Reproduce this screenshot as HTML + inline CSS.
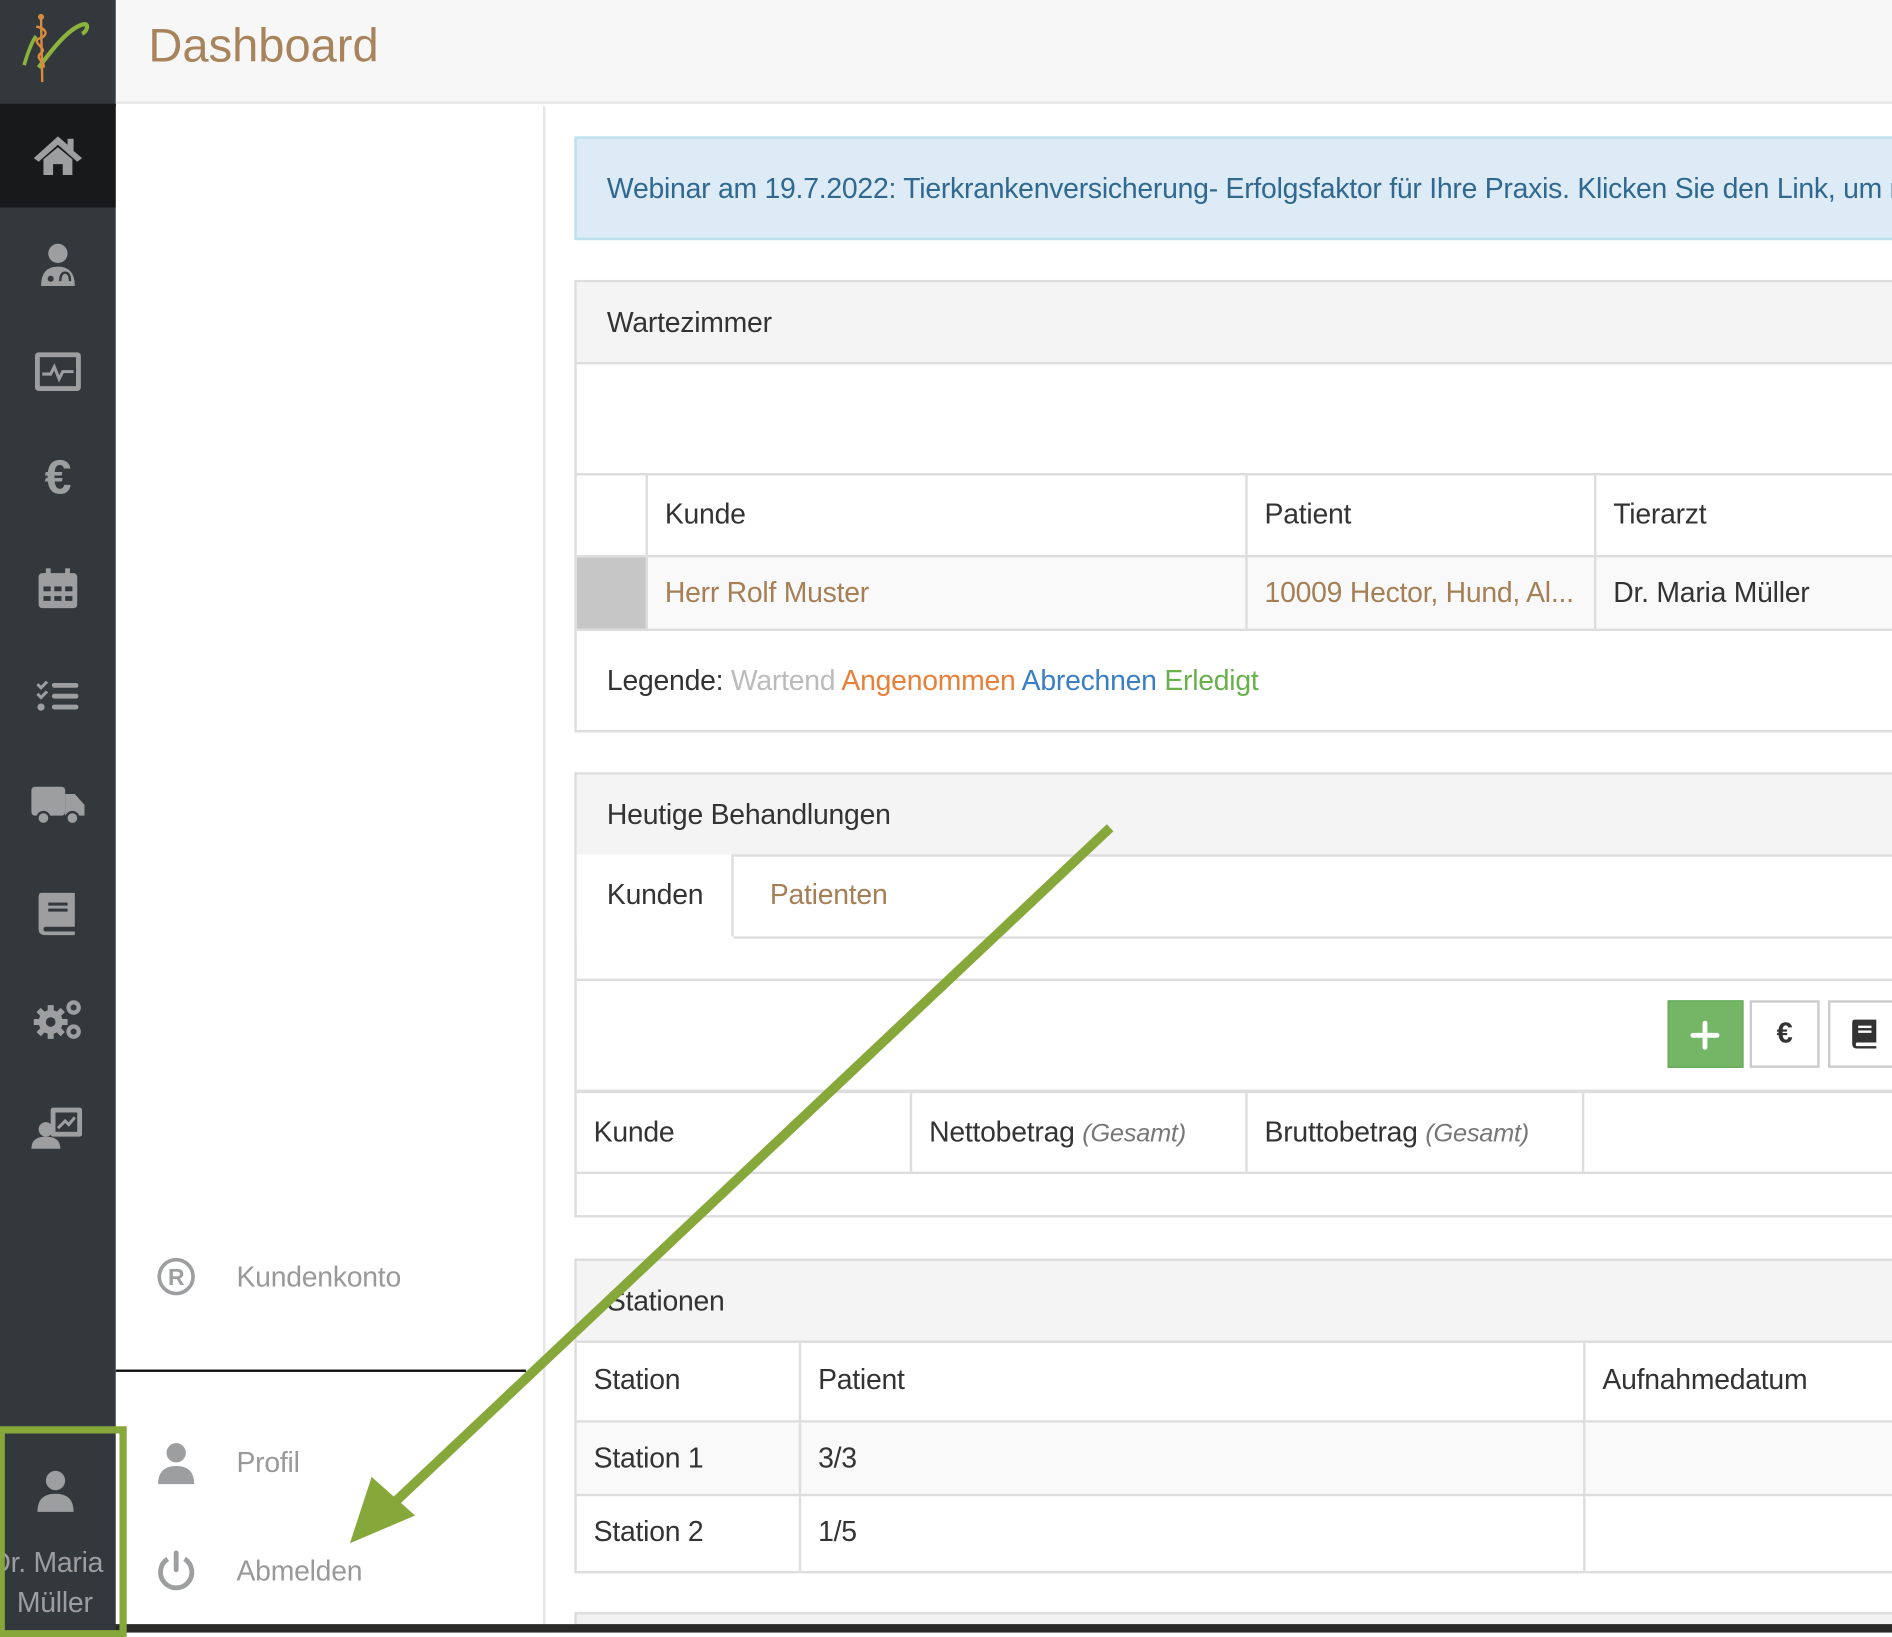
<!DOCTYPE html>
<html><head><meta charset="utf-8"><style>
*{box-sizing:border-box;margin:0;padding:0}
html,body{width:1892px;height:1632px;overflow:hidden;background:#fff}
#s{position:absolute;left:0;top:0;width:1568px;height:1353px;transform:scale(1.20663);transform-origin:0 0;font-family:"Liberation Sans",sans-serif;color:#333;font-size:23.5px;letter-spacing:-0.2px}
.a{position:absolute}
.side{left:0;top:0;width:96px;height:1353px;background:#33383c}
.ic{position:absolute;left:24px;width:48px;height:48px}
.hdr{left:96px;top:0;width:1472px;height:86px;background:#f7f7f7;border-bottom:2px solid #e6e6e6}
.panel{left:476px;width:1100px;border:2px solid #ddd;background:#fff}
.ph{height:68px;background:#f4f4f4;border-bottom:2px solid #ddd;padding-left:25px;line-height:66px}
.cell{position:absolute;border-right:2px solid #ddd;height:100%;padding-left:14px;white-space:nowrap}
.row{position:absolute;left:0;right:0;border-bottom:2px solid #ddd}
.br{color:#a57f55}
.gr{color:#999}
i{color:#777;font-size:21px}
</style></head><body><div id="s">
<div class="a side">
 <svg class="a" style="left:14px;top:10px" width="64" height="60" viewBox="0 0 64 60"><path d="M6 44 C10 30 14 22 16 20" stroke="#8cb43c" stroke-width="3" fill="none"/><path d="M18 46 C30 30 44 12 56 10 C60 10 58 16 54 18" stroke="#8cb43c" stroke-width="3.5" fill="none"/><line x1="20" y1="4" x2="21" y2="58" stroke="#d98a3d" stroke-width="2"/><path d="M16 12 C26 14 26 20 18 22 C12 26 26 30 20 34 C14 38 24 42 22 46" stroke="#d98a3d" stroke-width="2" fill="none"/><circle cx="20" cy="4" r="2.5" fill="#d98a3d"/></svg>
 <div class="a" style="left:0;top:86px;width:96px;height:86px;background:#18191b"></div>
 <svg class="ic" style="top:105px" viewBox="0 0 48 48" fill="#9d9ea0"><path d="M24 8 L4 26 L8 29 L24 15 L40 29 L44 26 L37 20 L37 10 L32 10 L32 15Z"/><path d="M12 27 L24 17 L36 27 L36 40 L28 40 L28 31 L20 31 L20 40 L12 40Z"/></svg>
 <svg class="ic" style="top:195px" viewBox="0 0 48 48" fill="#9d9ea0"><circle cx="24" cy="15" r="8"/><path d="M10 42 Q10 26 24 26 Q38 26 38 42Z"/><circle cx="18" cy="36" r="2.5" fill="#33383c"/><path d="M26 38 Q26 31 30 31 Q34 31 34 38" stroke="#33383c" stroke-width="2" fill="none"/></svg>
 <svg class="ic" style="top:284px" viewBox="0 0 48 48"><rect x="5" y="8" width="38" height="32" rx="3" fill="#9d9ea0"/><rect x="9" y="12" width="30" height="24" fill="#33383c"/><path d="M11 26 H18 L21 20 L25 30 L28 24 H37" stroke="#9d9ea0" stroke-width="2.5" fill="none"/></svg>
 <div class="a" style="left:0;top:374px;width:96px;text-align:center;font-size:40px;color:#9d9ea0;font-weight:bold">€</div>
 <svg class="ic" style="top:464px" viewBox="0 0 48 48" fill="#9d9ea0"><rect x="8" y="11" width="32" height="29" rx="3"/><rect x="14" y="7" width="4" height="8"/><rect x="30" y="7" width="4" height="8"/><g fill="#33383c"><rect x="12" y="22" width="6" height="4"/><rect x="21" y="22" width="6" height="4"/><rect x="30" y="22" width="6" height="4"/><rect x="12" y="30" width="6" height="4"/><rect x="21" y="30" width="6" height="4"/><rect x="30" y="30" width="6" height="4"/></g></svg>
 <svg class="ic" style="top:553px" viewBox="0 0 48 48" fill="#9d9ea0"><path d="M7 14 L10 17 L15 12 M7 22 L10 25 L15 20" stroke="#9d9ea0" stroke-width="2.5" fill="none"/><circle cx="10" cy="33" r="3"/><rect x="19" y="13" width="22" height="4" rx="2"/><rect x="19" y="22" width="22" height="4" rx="2"/><rect x="19" y="31" width="22" height="4" rx="2"/></svg>
 <svg class="ic" style="top:642px" viewBox="0 0 48 48" fill="#9d9ea0"><rect x="2" y="10" width="28" height="24" rx="3"/><path d="M30 16 H38 L46 25 V34 H30Z"/><circle cx="12" cy="36" r="5" stroke="#33383c" stroke-width="2"/><circle cx="36" cy="36" r="5" stroke="#33383c" stroke-width="2"/></svg>
 <svg class="ic" style="top:732px" viewBox="0 0 48 48" fill="#9d9ea0"><path d="M10 8 H38 V36 H14 Q12 36 12 38 Q12 40 14 40 H38 V43 H14 Q8 43 8 38 V12 Q8 8 10 8Z"/><rect x="16" y="16" width="16" height="2.5" fill="#33383c"/><rect x="16" y="21" width="16" height="2.5" fill="#33383c"/></svg>
 <svg class="ic" style="top:821px" viewBox="0 0 48 48" fill="#9d9ea0"><circle cx="18" cy="26" r="10"/><g stroke="#9d9ea0" stroke-width="5"><line x1="18" y1="12" x2="18" y2="40"/><line x1="4" y1="26" x2="32" y2="26"/><line x1="8" y1="16" x2="28" y2="36"/><line x1="28" y1="16" x2="8" y2="36"/></g><circle cx="18" cy="26" r="4" fill="#33383c"/><circle cx="37" cy="14" r="6"/><circle cx="37" cy="14" r="2.5" fill="#33383c"/><circle cx="37" cy="34" r="6"/><circle cx="37" cy="34" r="2.5" fill="#33383c"/></svg>
 <svg class="ic" style="top:910px" viewBox="0 0 48 48" fill="#9d9ea0"><rect x="18" y="8" width="26" height="24" rx="2"/><rect x="22" y="12" width="18" height="16" fill="#33383c"/><path d="M24 25 L30 19 L33 22 L38 16" stroke="#9d9ea0" stroke-width="2.5" fill="none"/><circle cx="14" cy="26" r="6"/><path d="M2 42 Q2 32 14 32 Q26 32 26 42Z"/></svg>
</div>
<div class="a hdr"><div class="a" style="left:27px;top:17px;font-size:39px;color:#a8845c;letter-spacing:0">Dashboard</div></div>
<div class="a" style="left:96px;top:88px;width:356px;height:1265px;background:#fff;border-right:2px solid #e6e6e6">
 <svg class="a" style="left:33px;top:953px" width="34" height="34" viewBox="0 0 34 34"><circle cx="17" cy="17" r="14" stroke="#9d9ea0" stroke-width="3" fill="none"/><text x="17" y="24" text-anchor="middle" font-family="Liberation Sans" font-weight="bold" font-size="19" fill="#9d9ea0">R</text></svg>
 <div class="a gr" style="left:100px;top:957px">Kundenkonto</div>
 <div class="a" style="left:0;top:1047px;width:340px;height:2px;background:#111"></div>
 <svg class="a" style="left:34px;top:1107px" width="32" height="36" viewBox="0 0 32 36" fill="#9d9ea0"><circle cx="16" cy="9" r="8"/><path d="M1 35 Q1 20 16 20 Q31 20 31 35Z"/></svg>
 <div class="a gr" style="left:100px;top:1111px">Profil</div>
 <svg class="a" style="left:33px;top:1197px" width="34" height="34" viewBox="0 0 34 34"><path d="M10 7 A13 13 0 1 0 24 7" stroke="#9d9ea0" stroke-width="4" fill="none"/><line x1="17" y1="2" x2="17" y2="16" stroke="#9d9ea0" stroke-width="4" stroke-linecap="round"/></svg>
 <div class="a gr" style="left:100px;top:1201px">Abmelden</div>
</div>
<div class="a" style="left:476px;top:113px;width:1100px;height:86px;background:#dcebf6;border:2px solid #bfe0ee;color:#31688f;padding-left:25px;line-height:82px;white-space:nowrap;overflow:hidden">Webinar am 19.7.2022: Tierkrankenversicherung- Erfolgsfaktor für Ihre Praxis. Klicken Sie den Link, um mehr zu erfahren</div>

<div class="a panel" style="top:232px;height:375px">
 <div class="ph">Wartezimmer</div>
 <div class="row" style="top:158px;height:70px;border-top:2px solid #ddd">
  <div class="cell" style="left:0;width:59px"></div>
  <div class="cell" style="left:59px;width:497px;line-height:64px">Kunde</div>
  <div class="cell" style="left:556px;width:289px;line-height:64px">Patient</div>
  <div class="cell" style="left:845px;width:300px;line-height:64px;border:0">Tierarzt</div>
 </div>
 <div class="row" style="top:228px;height:61px;background:#f9f9f9">
  <div class="cell" style="left:0;width:59px;background:#c6c6c6"></div>
  <div class="cell br" style="left:59px;width:497px;line-height:58px">Herr Rolf Muster</div>
  <div class="cell br" style="left:556px;width:289px;line-height:58px;overflow:hidden">10009 Hector, Hund, Al...</div>
  <div class="cell" style="left:845px;width:300px;line-height:58px;border:0">Dr. Maria Müller</div>
 </div>
 <div class="a" style="left:25px;top:317px;white-space:nowrap">Legende: <span style="color:#bbb">Wartend</span> <span style="color:#e8803a">Angenommen</span> <span style="color:#3a7fc6">Abrechnen</span> <span style="color:#6ab04c">Erledigt</span></div>
</div>

<div class="a panel" style="top:640px;height:369px">
 <div class="ph">Heutige Behandlungen</div>
 <div class="a" style="left:0;top:66px;width:130px;height:68px;border-right:2px solid #ddd;padding-left:25px;line-height:66px;background:#fff">Kunden</div>
 <div class="a br" style="left:160px;top:66px;line-height:66px">Patienten</div>
 <div class="a" style="left:130px;top:134px;width:1000px;height:2px;background:#ddd"></div>
 <div class="a" style="left:0;top:169px;width:1100px;height:2px;background:#ddd"></div>
 <div class="a" style="left:904px;top:187px;width:63px;height:56px;background:#74b666;border:1px solid #62a856"></div>
 <div class="a" style="left:923px;top:214px;width:24px;height:4px;background:#fff;border-radius:2px"></div>
 <div class="a" style="left:933px;top:204px;width:4px;height:24px;background:#fff;border-radius:2px"></div>
 <div class="a" style="left:972px;top:187px;width:58px;height:56px;border:2px solid #ccc;text-align:center;line-height:52px;font-weight:bold;font-size:24px;color:#333">€</div>
 <div class="a" style="left:1037px;top:187px;width:70px;height:56px;border:2px solid #ccc"></div>
 <svg class="a" style="left:1056px;top:202px" width="22" height="26" viewBox="0 0 22 26" fill="#333"><path d="M3 1 H21 V20 H5 Q4 20 4 22 Q4 23 5 23 H21 V25 H5 Q1 25 1 21 V4 Q1 1 3 1Z"/><rect x="6" y="6" width="11" height="2" fill="#fff"/><rect x="6" y="10" width="11" height="2" fill="#fff"/></svg>
 <div class="row" style="top:261px;height:70px;border-top:3px solid #ddd">
  <div class="cell" style="left:0;width:278px;line-height:64px">Kunde</div>
  <div class="cell" style="left:278px;width:278px;line-height:64px">Nettobetrag <i>(Gesamt)</i></div>
  <div class="cell" style="left:556px;width:279px;line-height:64px">Bruttobetrag <i>(Gesamt)</i></div>
 </div>
</div>

<div class="a panel" style="top:1043px;height:261px">
 <div class="ph">Stationen</div>
 <div class="row" style="top:66px;height:68px">
  <div class="cell" style="left:0;width:186px;line-height:64px">Station</div>
  <div class="cell" style="left:186px;width:650px;line-height:64px">Patient</div>
  <div class="cell" style="left:836px;width:300px;line-height:64px;border:0">Aufnahmedatum</div>
 </div>
 <div class="row" style="top:134px;height:61px;background:#f9f9f9">
  <div class="cell" style="left:0;width:186px;line-height:58px">Station 1</div>
  <div class="cell" style="left:186px;width:650px;line-height:58px">3/3</div>
 </div>
 <div class="row" style="top:195px;height:62px;border:0">
  <div class="cell" style="left:0;width:186px;line-height:58px">Station 2</div>
  <div class="cell" style="left:186px;width:650px;line-height:58px">1/5</div>
 </div>
</div>
<div class="a" style="left:476px;top:1336px;width:1100px;height:12px;background:#f2f2f2;border:2px solid #ddd"></div>
<div class="a" style="left:0;top:1346px;width:1568px;height:7px;background:#2a2a28"></div>
<div class="a" style="left:0;top:1346px;width:96px;height:7px;background:#33383c"></div>
<div class="a" style="left:0;top:1182px;width:96px;color:#9d9ea0;overflow:hidden;height:171px">
 <svg class="a" style="left:30px;top:36px" width="32" height="36" viewBox="0 0 32 36" fill="#9d9ea0"><circle cx="16" cy="9" r="8"/><path d="M1 35 Q1 20 16 20 Q31 20 31 35Z"/></svg>
 <div class="a" style="left:-8px;top:97px;white-space:nowrap;line-height:33px;font-size:23.5px">Dr. Maria</div>
 <div class="a" style="left:14px;top:130px;white-space:nowrap;line-height:33px;font-size:23.5px">Müller</div>
</div>
<div class="a" style="left:0;top:1182px;width:105px;height:175px;border:6px solid #86a83a;border-left-width:4px"></div>
<svg class="a" style="left:0;top:0" width="1568" height="1353"><line x1="920" y1="686" x2="326" y2="1246" stroke="#86a83a" stroke-width="8"/><path d="M290 1279 L308 1224 L344 1256Z" fill="#86a83a"/></svg>
</div></body></html>
